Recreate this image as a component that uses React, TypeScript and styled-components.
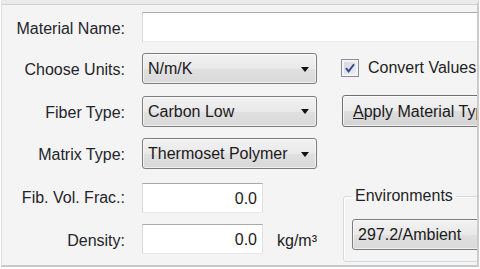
import styled, { createGlobalStyle } from "styled-components";

const GlobalStyle = createGlobalStyle`
  body {
    margin: 0;
    background: #ffffff;
    font-family: "Liberation Sans", Arial, sans-serif;
  }
`;

const Frame = styled.div`
  box-sizing: border-box;
  margin-left: 1px;
  width: 478px;
  height: 267px;
  background: #f4f4f4;
  border-left: 1px solid #dcdcdc;
  border-top: 4px solid #ebebeb;
  border-right: 2px solid #cbcbcb;
  border-bottom: 2px solid #c8c8c8;
  box-shadow: inset 0 1px 0 #d0d0d0;
  overflow: hidden;
  padding: 8px 0 0 10px;
`;

const Form = styled.div`
  display: grid;
  grid-template-columns: 113px 175px 1fr;
  grid-template-rows: 30px 31px 32px 31px 33px 30px;
  column-gap: 17px;
  row-gap: 11px;
  font-size: 16px;
  color: #222;
`;

const Label = styled.div`
  grid-column: 1;
  display: flex;
  align-items: center;
  justify-content: flex-end;
  padding-top: 3px;
  white-space: nowrap;
  color: #24242c;
`;

const TextBox = styled.div<{ $numeric?: boolean; $wide?: boolean }>`
  box-sizing: border-box;
  height: 30px;
  width: ${({ $wide }) => ($wide ? "calc(100% + 30px)" : "121px")};
  background: #fff;
  border: 1px solid;
  border-color: #a9a9a9 #e0e0e0 #eaeaea #d8d8d8;
  display: flex;
  align-items: center;
  justify-content: ${({ $numeric }) => ($numeric ? "flex-end" : "flex-start")};
  padding: 2px 5px 0;
  align-self: end;
  color: #1c1c1c;
`;

const Wide = styled.div`
  grid-column: 2 / span 2;
  display: flex;
`;

const Combo = styled.div<{ $width?: number }>`
  box-sizing: border-box;
  width: ${({ $width }) => ($width ? `${$width}px` : "100%")};
  height: 31px;
  align-self: center;
  display: flex;
  align-items: center;
  justify-content: space-between;
  padding: 1px 7px 0 5px;
  border: 1px solid #7d7d7d;
  border-radius: 3px;
  background: linear-gradient(#f2f2f2, #e9e9e9 50%, #e0e0e0 52%, #d9d9d9);
  box-shadow: inset 0 0 0 1px rgba(255, 255, 255, 0.6);
  white-space: nowrap;
  color: #1a1a1a;
`;

const Caret = styled.span`
  flex: none;
  width: 0;
  height: 0;
  margin-left: 8px;
  border-left: 4.5px solid transparent;
  border-right: 4.5px solid transparent;
  border-top: 5px solid #111;
`;

const Cell = styled.div`
  grid-column: 2;
  display: flex;
  align-items: center;
  gap: 14px;
  min-width: 0;
`;

const CheckRow = styled.label`
  grid-column: 3;
  margin-left: 7px;
  display: flex;
  align-items: center;
  gap: 9px;
  white-space: nowrap;
  color: #1e1e1e;
  padding-bottom: 2px;
`;

const CheckBox = styled.span`
  box-sizing: border-box;
  flex: none;
  width: 18px;
  height: 18px;
  border: 1px solid #8d8f94;
  background: linear-gradient(135deg, #d4d6e0, #eef0f5);
  box-shadow: inset 0 0 0 2px #f4f5f8;
  display: flex;
  align-items: center;
  justify-content: center;
`;

const Button = styled.div`
  grid-column: 3;
  margin-left: 8px;
  box-sizing: border-box;
  width: 170px;
  height: 32px;
  display: flex;
  align-items: center;
  padding: 1px 10px 0;
  border: 1px solid #707070;
  border-radius: 3px;
  background: linear-gradient(#f3f3f3, #ebebeb 50%, #dddddd 52%, #d3d3d3);
  box-shadow: inset 0 0 0 1px rgba(255, 255, 255, 0.7);
  white-space: nowrap;
  color: #1a1a1a;
`;

const Group = styled.fieldset`
  grid-column: 3;
  grid-row: 5 / span 2;
  margin: 7px 0 0 9px;
  box-sizing: border-box;
  width: 180px;
  height: 75px;
  padding: 0 0 0 8px;
  border: 1px solid #d3dbe0;
  border-radius: 3px;
  box-shadow: inset 1px 1px 0 #fff;
`;

const Legend = styled.legend`
  padding: 0 3px;
  font-size: 16px;
  line-height: 18px;
  color: #1f1f26;
`;

const EnvCombo = styled(Combo)`
  margin-top: 14px;
`;

const Unit = styled.span`
  padding-top: 4px;
  color: #1c1c1c;
`;

export default function App() {
  return (
    <>
      <GlobalStyle />
      <Frame>
        <Form>
          <Label>Material Name:</Label>
          <Wide>
            <TextBox $wide />
          </Wide>

          <Label>Choose Units:</Label>
          <Cell>
            <Combo>
              N/m/K
              <Caret />
            </Combo>
          </Cell>
          <CheckRow>
            <CheckBox>
              <svg width="12" height="12" viewBox="0 0 12 12">
                <path d="M2 6.2 L4.6 9.4 L10 2.2" fill="none" stroke="#34468a" strokeWidth="1.9" />
              </svg>
            </CheckBox>
            Convert Values
          </CheckRow>

          <Label>Fiber Type:</Label>
          <Cell>
            <Combo>
              Carbon Low
              <Caret />
            </Combo>
          </Cell>
          <Button>
            <u>A</u>pply Material Type
          </Button>

          <Label>Matrix Type:</Label>
          <Cell>
            <Combo>
              Thermoset Polymer
              <Caret />
            </Combo>
          </Cell>

          <Label>Fib. Vol. Frac.:</Label>
          <Cell>
            <TextBox $numeric>0.0</TextBox>
          </Cell>
          <Group>
            <Legend>Environments</Legend>
            <EnvCombo $width={170}>
              297.2/Ambient
              <Caret />
            </EnvCombo>
          </Group>

          <Label>Density:</Label>
          <Cell>
            <TextBox $numeric>0.0</TextBox>
            <Unit>kg/m³</Unit>
          </Cell>
        </Form>
      </Frame>
    </>
  );
}
